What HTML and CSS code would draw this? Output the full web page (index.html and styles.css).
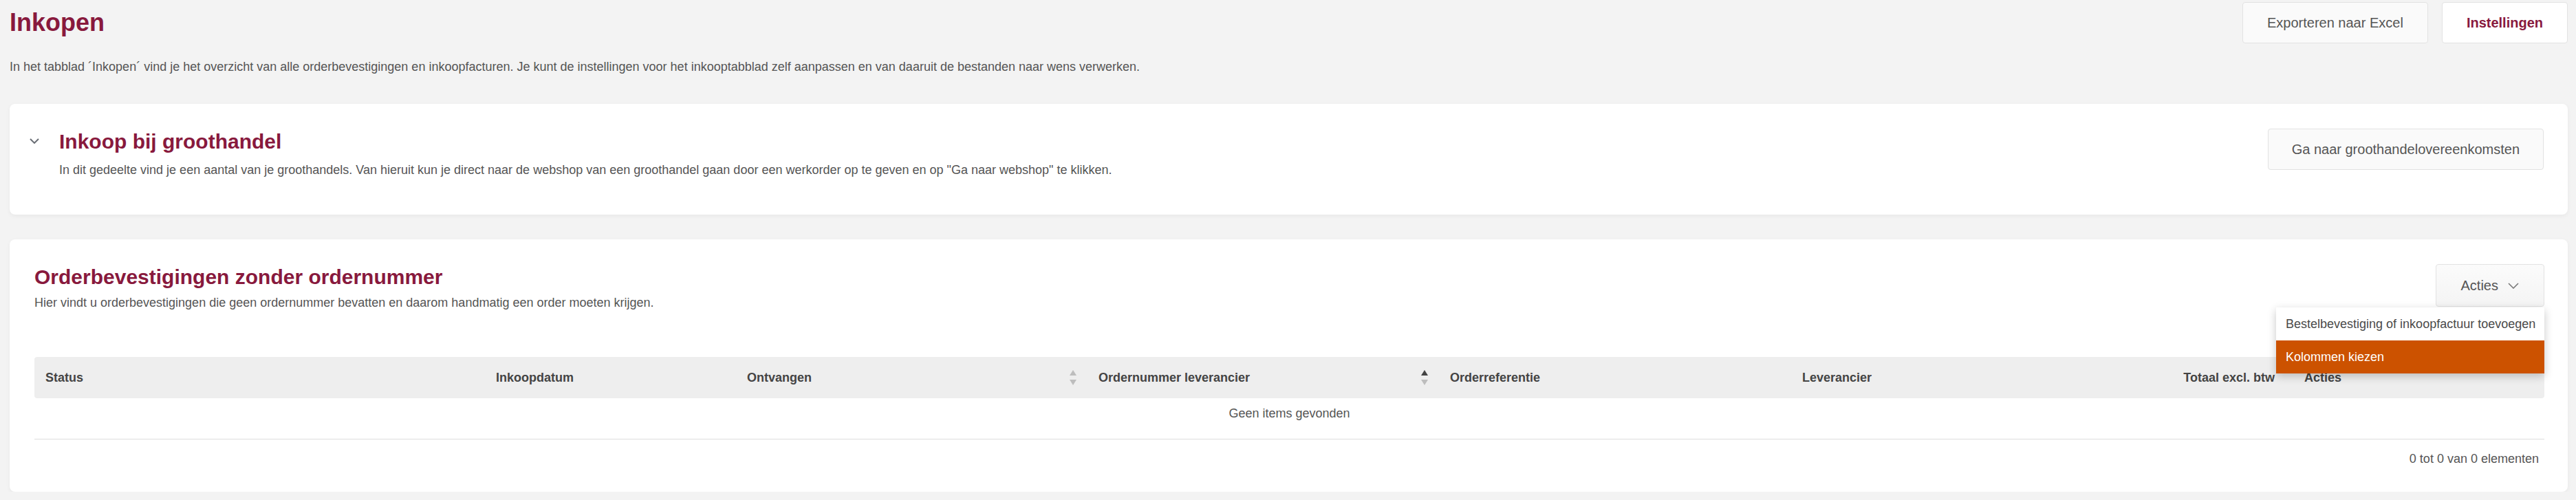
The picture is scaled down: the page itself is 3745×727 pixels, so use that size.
FILE: index.html
```html
<!DOCTYPE html>
<html lang="nl">
<head>
  <meta charset="UTF-8" />
  <title>Inkopen</title>
  <link rel="stylesheet" href="styles.css">
</head>
<body>
  <!-- PAGE HEADER -->
  <header class="page-head">
    <h1>Inkopen</h1>
    <div class="head-actions">
      <button class="btn">Exporteren naar Excel</button>
      <button class="btn btn-primary">Instellingen</button>
    </div>
  </header>
  <p class="intro">In het tabblad ´Inkopen´ vind je het overzicht van alle orderbevestigingen en inkoopfacturen. Je kunt de instellingen voor het inkooptabblad zelf aanpassen en van daaruit de bestanden naar wens verwerken.</p>

  <!-- WHOLESALE -->
  <section class="card card-wholesale">
    <span class="toggle">
      <svg width="14" height="8" viewBox="0 0 14 8"><polyline points="1,1 7,7 13,1" fill="none" stroke="#6b6f76" stroke-width="2" /></svg>
    </span>
    <div class="card-text">
      <h2>Inkoop bij groothandel</h2>
      <p>In dit gedeelte vind je een aantal van je groothandels. Van hieruit kun je direct naar de webshop van een groothandel gaan door een werkorder op te geven en op "Ga naar webshop" te klikken.</p>
    </div>
    <button class="btn btn-wide">Ga naar groothandelovereenkomsten</button>
  </section>

  <!-- ORDERS WITHOUT NUMBER -->
  <section class="card card-orders">
    <div class="card-head">
      <div class="card-text">
        <h2>Orderbevestigingen zonder ordernummer</h2>
        <p>Hier vindt u orderbevestigingen die geen ordernummer bevatten en daarom handmatig een order moeten krijgen.</p>
      </div>
      <div class="dropdown">
        <button class="btn btn-menu">Acties
          <svg width="16" height="9" viewBox="0 0 16 9"><polyline points="1,1 8,8 15,1" fill="none" stroke="#7a7a7a" stroke-width="1.6" /></svg>
        </button>
        <ul class="dropdown-menu">
          <li>Bestelbevestiging of inkoopfactuur toevoegen</li>
          <li class="active">Kolommen kiezen</li>
        </ul>
      </div>
    </div>

    <table class="grid">
      <colgroup>
        <col style="width:655px"><col style="width:365px"><col style="width:511px"><col style="width:511px">
        <col style="width:512px"><col style="width:512px"><col style="width:218px"><col style="width:365px">
      </colgroup>
      <thead>
        <tr>
          <th>Status</th>
          <th>Inkoopdatum</th>
          <th><div class="sortable">Ontvangen
            <svg class="sort" width="10" height="22" viewBox="0 0 10 22"><polygon points="5,0 10,8 0,8" fill="#bdbdbd" /><polygon points="0,14 10,14 5,22" fill="#bdbdbd" /></svg>
          </div></th>
          <th><div class="sortable">Ordernummer leverancier
            <svg class="sort" width="10" height="22" viewBox="0 0 10 22"><polygon points="5,0 10,8 0,8" fill="#444" /><polygon points="0,14 10,14 5,22" fill="#bdbdbd" /></svg>
          </div></th>
          <th>Orderreferentie</th>
          <th>Leverancier</th>
          <th class="num">Totaal excl. btw</th>
          <th>Acties</th>
        </tr>
      </thead>
      <tbody>
        <tr>
          <td colspan="8" class="empty">Geen items gevonden</td>
        </tr>
      </tbody>
    </table>
    <div class="grid-footer">0 tot 0 van 0 elementen</div>
  </section>
</body>
</html>
```

FILE: styles.css
```css
body {
  margin: 0;
  padding: 0 12px 0 14px;
  background: #f3f3f3;
  font-family: 'Liberation Sans', Arial, sans-serif;
  color: #555;
}

.page-head {
  display: flex;
  justify-content: space-between;
  align-items: flex-start;
  padding-top: 3px;
}

h1 {
  margin: 9px 0 0;
  font-size: 36px;
  line-height: 41px;
  color: #88193d;
}

.head-actions {
  display: flex;
  gap: 20px;
}

.btn {
  height: 60px;
  padding: 0 35px;
  font-family: inherit;
  font-size: 20px;
  color: #555;
  background: #fafafa;
  border: 1px solid #e2e2e2;
  border-radius: 4px;
  cursor: pointer;
}

.btn-primary {
  background: #fff;
  color: #88193d;
  font-weight: bold;
}

.intro {
  margin: 24px 0 0;
  font-size: 18px;
}

.card {
  background: #fff;
  border-radius: 8px;
  box-shadow: 0 2px 6px rgba(0, 0, 0, 0.05);
}

.card h2 {
  margin: 2px 0 0;
  font-size: 30px;
  color: #88193d;
}

.card p {
  margin: 14px 0 0;
  font-size: 18px;
}

/* wholesale card */
.card-wholesale {
  display: flex;
  align-items: flex-start;
  margin-top: 43px;
  padding: 36px 35px 54px 29px;
}

.toggle {
  display: flex;
  margin: 14px 29px 0 0;
}

.btn-wide {
  margin-left: auto;
  padding: 0 34px;
}

/* orders card */
.card-orders {
  margin-top: 36px;
  padding: 36px 34px 37px 36px;
}

.card-orders p {
  margin-top: 10px;
}

.card-head {
  display: flex;
  justify-content: space-between;
  align-items: flex-start;
}

.dropdown {
  position: relative;
}

.btn-menu {
  height: 62px;
  display: flex;
  align-items: center;
  gap: 14px;
  padding: 0 36px;
  background: linear-gradient(#fbfbfb, #f4f4f4);
}

.dropdown-menu {
  position: absolute;
  top: 63px;
  right: 0;
  width: 390px;
  margin: 0;
  padding: 0;
  list-style: none;
  background: #fff;
  box-shadow: 0 4px 12px rgba(0, 0, 0, 0.22);
  z-index: 10;
}

.dropdown-menu li {
  height: 48px;
  line-height: 48px;
  padding: 0 14px;
  font-size: 18px;
  color: #4a4a4a;
  white-space: nowrap;
}

.dropdown-menu li.active {
  background: #cc5200;
  color: #fff;
}

.grid {
  width: 100%;
  margin-top: 68px;
  border-collapse: separate;
  border-spacing: 0;
  table-layout: fixed;
}

.grid th {
  height: 60px;
  padding: 0 16px;
  background: #eee;
  font-size: 18px;
  color: #444;
  text-align: left;
}

.grid th:first-child {
  border-radius: 4px 0 0 4px;
}

.grid th:last-child {
  border-radius: 0 4px 4px 0;
}

.grid th.num {
  padding-right: 27px;
  text-align: right;
}

.sortable {
  display: flex;
  align-items: center;
}

.sort {
  margin-left: auto;
}

.grid td.empty {
  padding: 12px 16px 26px;
  text-align: center;
  font-size: 18px;
  color: #555;
  border-bottom: 1px solid #ddd;
}

.grid-footer {
  padding: 18px 8px 0;
  text-align: right;
  font-size: 18px;
}
```
